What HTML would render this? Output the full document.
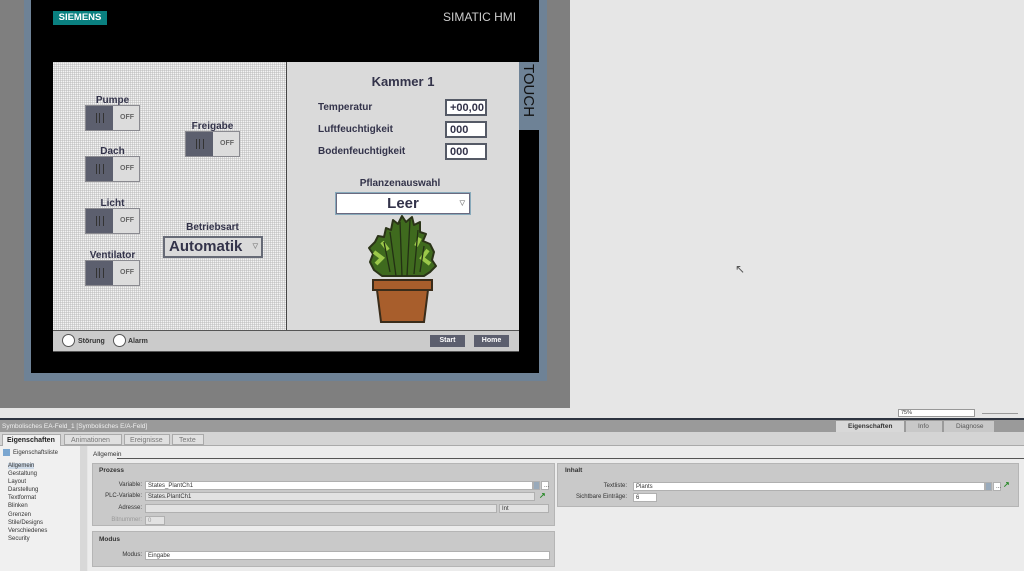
<!DOCTYPE html>
<html><head><meta charset="utf-8"><style>
*{margin:0;padding:0;box-sizing:border-box}
body{width:1024px;height:571px;overflow:hidden;background:#e6e6e6;font-family:"Liberation Sans",sans-serif;position:relative}
.a{position:absolute}
.lbl{position:absolute;font-weight:bold;font-size:10px;color:#33334a;text-align:center}
.sw{position:absolute;width:55px;height:26px;border:1px solid #8a8a90;background:#dcdcdc}
.sw .k{position:absolute;left:0;top:0;width:27px;height:24px;background:#5c5f6e}
.sw .k:after{content:"";position:absolute;left:10px;top:7px;width:6px;height:10px;border-left:1px solid #333;border-right:1px solid #333}
.sw .k:before{content:"";position:absolute;left:13px;top:7px;width:1px;height:10px;background:#333}
.sw span{position:absolute;left:34px;top:8px;font-size:7px;color:#666;font-weight:bold}
.fld{position:absolute;background:#fff;border:2px solid #555a66;font-weight:bold;font-size:11px;color:#33334a;padding:1px 3px;height:17px;width:42px}
.p{font-size:6.5px;color:#333}
.in{position:absolute;background:#fff;border:1px solid #b0b0b0;height:9px;font-size:6px;padding-left:2px;line-height:8px;color:#333}
.dis{background:#e2e2e2}
</style></head><body>
<div class="a" style="left:0;top:0;width:570px;height:408px;background:#7f7f7f"></div>
<div class="a" style="left:24px;top:0;width:523px;height:381px;background:#6e8296"></div>
<div class="a" style="left:31px;top:0;width:508px;height:373px;background:#000"></div>
<div class="a" style="left:53px;top:11px;width:54px;height:14px;background:#0a8080;color:#fff;font-weight:bold;font-size:9.5px;text-align:center;line-height:14px">SIEMENS</div>
<div class="a" style="left:443px;top:10px;color:#ccc;font-size:12px">SIMATIC HMI</div>
<div class="a" style="left:519px;top:62px;width:20px;height:68px;background:#6e8296"></div>
<div class="a" style="left:521px;top:64px;width:66px;height:18px;transform-origin:0 0;transform:translate(16px,0) rotate(90deg);font-size:15px;color:#111">TOUCH</div>
<div class="a" style="left:53px;top:62px;width:234px;height:268px;background-color:#f4f4f4;background-image:repeating-linear-gradient(90deg,transparent 0 1px,rgba(180,180,180,.45) 1px 2px),repeating-linear-gradient(0deg,transparent 0 1px,rgba(180,180,180,.45) 1px 2px)"></div>
<div class="a" style="left:286px;top:62px;width:1px;height:268px;background:#444"></div>
<div class="a" style="left:287px;top:62px;width:232px;height:268px;background:#dadada"></div>
<div class="lbl" style="left:85px;top:95px;width:55px">Pumpe</div>
<div class="sw" style="left:85px;top:105px"><div class="k"></div><span>OFF</span></div>
<div class="lbl" style="left:85px;top:146px;width:55px">Dach</div>
<div class="sw" style="left:85px;top:156px"><div class="k"></div><span>OFF</span></div>
<div class="lbl" style="left:85px;top:198px;width:55px">Licht</div>
<div class="sw" style="left:85px;top:208px"><div class="k"></div><span>OFF</span></div>
<div class="lbl" style="left:80px;top:250px;width:65px">Ventilator</div>
<div class="sw" style="left:85px;top:260px"><div class="k"></div><span>OFF</span></div>
<div class="lbl" style="left:185px;top:121px;width:55px">Freigabe</div>
<div class="sw" style="left:185px;top:131px"><div class="k"></div><span>OFF</span></div>
<div class="lbl" style="left:170px;top:222px;width:85px">Betriebsart</div>
<div class="a" style="left:163px;top:236px;width:100px;height:22px;background:#dadada;border:2px solid #666a76;font-weight:bold;font-size:15px;color:#33334a;padding-left:4px;line-height:18px">Automatik<span style="position:absolute;right:3px;top:0;font-size:7px;color:#888">▽</span></div>
<div class="a" style="left:287px;top:74px;width:232px;text-align:center;font-weight:bold;font-size:13px;color:#33334a">Kammer 1</div>
<div class="lbl" style="left:318px;top:102px;text-align:left">Temperatur</div>
<div class="lbl" style="left:318px;top:124px;text-align:left">Luftfeuchtigkeit</div>
<div class="lbl" style="left:318px;top:146px;text-align:left">Bodenfeuchtigkeit</div>
<div class="fld" style="left:445px;top:99px">+00,00</div>
<div class="fld" style="left:445px;top:121px">000</div>
<div class="fld" style="left:445px;top:143px">000</div>
<div class="lbl" style="left:340px;top:178px;width:120px">Pflanzenauswahl</div>
<div class="a" style="left:336px;top:193px;width:134px;height:21px;background:#fff;border:1px solid #6a6a80;outline:1px solid #8ab;text-align:center;font-weight:bold;font-size:15px;color:#33334a;line-height:19px">Leer<span style="position:absolute;right:4px;top:0;font-size:7px;color:#888">▽</span></div>
<svg class="a" style="left:360px;top:212px" width="90" height="115" viewBox="0 0 90 115">
<path d="M22 64 L14 58 L10 50 L13 42 L9 36 L15 30 L18 24 L24 25 L26 16 L31 18 L33 8 L38 12 L42 4 L46 10 L52 5 L54 13 L60 10 L60 20 L66 22 L63 29 L70 32 L74 40 L72 48 L76 54 L70 60 L64 64 Z" fill="#3f6a1e" stroke="#2b3418" stroke-width="2" stroke-linejoin="round"/>
<path d="M14 40 L22 46 L16 52 M68 38 L62 46 L70 52 M22 30 L28 38 M60 26 L56 34" stroke="#9cc84a" stroke-width="4" fill="none"/>
<path d="M40 10 L42 64 M50 8 L47 64 M30 20 L36 64 M58 18 L54 62 M24 30 L30 60 M64 34 L60 60" stroke="#233014" stroke-width="1.3" fill="none"/>
<path d="M13 68 L72 68 L72 78 L13 78 Z" fill="#a85e2c" stroke="#3a2c1a" stroke-width="2"/>
<path d="M17 78 L68 78 L64 110 L21 110 Z" fill="#a85e2c" stroke="#3a2c1a" stroke-width="2"/>
</svg>
<div class="a" style="left:53px;top:330px;width:466px;height:22px;background:#cbcbcb;border-top:1px solid #555;border-bottom:1px solid #555"></div>
<div class="a" style="left:62px;top:334px;width:13px;height:13px;border-radius:50%;background:#fff;border:1px solid #555"></div>
<div class="a" style="left:78px;top:338px;font-size:7px;font-weight:bold;color:#333">Störung</div>
<div class="a" style="left:113px;top:334px;width:13px;height:13px;border-radius:50%;background:#fff;border:1px solid #555"></div>
<div class="a" style="left:128px;top:338px;font-size:7px;font-weight:bold;color:#333">Alarm</div>
<div class="a" style="left:430px;top:335px;width:35px;height:12px;background:#5c5f6e;color:#fff;font-size:7px;font-weight:bold;text-align:center;line-height:12px">Start</div>
<div class="a" style="left:474px;top:335px;width:35px;height:12px;background:#5c5f6e;color:#fff;font-size:7px;font-weight:bold;text-align:center;line-height:12px">Home</div>
<div class="a" style="left:735px;top:262px;font-size:12px;color:#555">↖</div>
<div class="a" style="left:0;top:408px;width:1024px;height:10px;background:#e6e6e6"></div>
<div class="a p" style="left:898px;top:409px;width:77px;height:8px;background:#fff;border:1px solid #999;font-size:5.5px;padding-left:2px;line-height:6px">75%</div>
<div class="a" style="left:982px;top:413px;width:36px;height:1px;background:#999"></div>
<div class="a" style="left:0;top:418px;width:1024px;height:2px;background:#2e3440"></div>
<div class="a" style="left:0;top:420px;width:1024px;height:12px;background:#9a9a9a;color:#f0f0f0;font-size:6.5px;padding:3px 2px">Symbolisches EA-Feld_1 [Symbolisches E/A-Feld]</div>
<div class="a" style="left:836px;top:421px;width:68px;height:11px;background:#d8d8d8;font-size:6.5px;font-weight:bold;color:#333;padding:2px 0 0 12px">Eigenschaften</div>
<div class="a" style="left:906px;top:421px;width:36px;height:11px;background:#c8c8c8;font-size:6.5px;color:#555;padding:2px 0 0 12px">Info</div>
<div class="a" style="left:944px;top:421px;width:50px;height:11px;background:#c8c8c8;font-size:6.5px;color:#555;padding:2px 0 0 12px">Diagnose</div>
<div class="a" style="left:0;top:432px;width:1024px;height:14px;background:#d4d4d4;border-bottom:1px solid #aaa"></div>
<div class="a" style="left:2px;top:434px;width:59px;height:12px;background:#f0f0f0;border:1px solid #aaa;border-bottom:none;font-size:7px;font-weight:bold;padding:2px 4px;color:#222">Eigenschaften</div>
<div class="a" style="left:64px;top:434px;width:58px;height:11px;background:#e0e0e0;border:1px solid #aaa;font-size:7px;padding:2px 6px;color:#777">Animationen</div>
<div class="a" style="left:124px;top:434px;width:46px;height:11px;background:#e0e0e0;border:1px solid #aaa;font-size:7px;padding:2px 5px;color:#777">Ereignisse</div>
<div class="a" style="left:172px;top:434px;width:32px;height:11px;background:#e0e0e0;border:1px solid #aaa;font-size:7px;padding:2px 6px;color:#777">Texte</div>
<div class="a" style="left:0;top:446px;width:80px;height:125px;background:#f0f0f0"></div>
<div class="a" style="left:80px;top:446px;width:7px;height:125px;background:#d8d8d8"></div>
<div class="a" style="left:3px;top:449px;width:7px;height:7px;background:#7aa6d0"></div>
<div class="a p" style="left:13px;top:450px;font-size:6px">Eigenschaftsliste</div>
<div class="a p" style="left:8px;top:462px;line-height:8.1px;font-size:6px"><span style="background:#cfdbe8">Allgemein</span><br>Gestaltung<br>Layout<br>Darstellung<br>Textformat<br>Blinken<br>Grenzen<br>Stile/Designs<br>Verschiedenes<br>Security</div>
<div class="a" style="left:88px;top:446px;width:936px;height:125px;background:#ececec"></div>
<div class="a p" style="left:93px;top:451px;font-size:6.5px">Allgemein</div>
<div class="a" style="left:117px;top:458px;width:907px;height:1px;background:#555"></div>
<div class="a" style="left:92px;top:463px;width:463px;height:63px;background:#c9c9c9;border:1px solid #b5b5b5"></div>
<div class="a p" style="left:99px;top:467px;font-weight:bold;font-size:6.5px">Prozess</div>
<div class="a p" style="left:100px;top:482px;width:42px;text-align:right;font-size:6px">Variable:</div>
<div class="in" style="left:145px;top:481px;width:388px">States_PlantCh1</div>
<div class="in" style="left:533px;top:481px;width:7px;background:#9ab"></div>
<div class="in" style="left:541px;top:481px;width:8px">...</div>
<div class="a p" style="left:95px;top:493px;width:47px;text-align:right;font-size:6px">PLC-Variable:</div>
<div class="in dis" style="left:145px;top:492px;width:390px">States.PlantCh1</div>
<div class="a" style="left:539px;top:491px;color:#2a8a2a;font-size:8px;font-weight:bold">↗</div>
<div class="a p" style="left:100px;top:505px;width:42px;text-align:right;font-size:6px">Adresse:</div>
<div class="in dis" style="left:145px;top:504px;width:352px"></div>
<div class="in dis" style="left:499px;top:504px;width:50px">Int</div>
<div class="a p" style="left:95px;top:517px;width:47px;text-align:right;font-size:6px;color:#999">Bitnummer:</div>
<div class="in dis" style="left:145px;top:516px;width:20px;color:#999">0</div>
<div class="a" style="left:92px;top:531px;width:463px;height:36px;background:#c9c9c9;border:1px solid #b5b5b5"></div>
<div class="a p" style="left:99px;top:536px;font-weight:bold;font-size:6.5px">Modus</div>
<div class="a p" style="left:100px;top:552px;width:42px;text-align:right;font-size:6px">Modus:</div>
<div class="in" style="left:145px;top:551px;width:405px">Eingabe</div>
<div class="a" style="left:557px;top:463px;width:462px;height:44px;background:#c9c9c9;border:1px solid #b5b5b5"></div>
<div class="a p" style="left:565px;top:467px;font-weight:bold;font-size:6.5px">Inhalt</div>
<div class="a p" style="left:565px;top:483px;width:62px;text-align:right;font-size:6px">Textliste:</div>
<div class="in" style="left:633px;top:482px;width:352px">Plants</div>
<div class="in" style="left:985px;top:482px;width:7px;background:#9ab"></div>
<div class="in" style="left:993px;top:482px;width:8px">...</div>
<div class="a" style="left:1003px;top:480px;color:#2a8a2a;font-size:8px;font-weight:bold">↗</div>
<div class="a p" style="left:560px;top:494px;width:67px;text-align:right;font-size:6px">Sichtbare Einträge:</div>
<div class="in" style="left:633px;top:493px;width:24px">6</div>
</body></html>
